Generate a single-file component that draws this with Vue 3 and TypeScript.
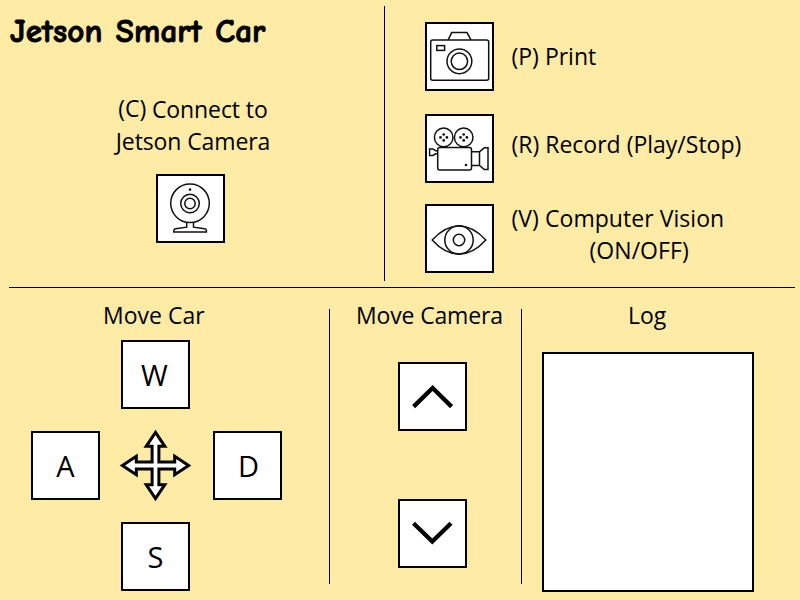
<script setup lang="ts">
interface Key {
  label: string
  area: string
}

const keys: Key[] = [
  { label: 'W', area: 'up' },
  { label: 'A', area: 'left' },
  { label: 'D', area: 'right' },
  { label: 'S', area: 'down' },
]
</script>

<template>
  <main class="app">
    <section class="top">
      <div class="connect">
        <h1 class="title">Jetson Smart Car</h1>
        <p class="text connect-label"><span class="hotkey">(C)</span> Connect to<br />Jetson Camera</p>
        <button class="tile webcam" aria-label="Connect">
          <svg class="icon" viewBox="0 0 65 65">
            <circle cx="32" cy="27.3" r="19.3" />
            <circle cx="32" cy="27.5" r="9.3" />
            <circle cx="32" cy="27.5" r="5.2" />
            <circle class="dot" cx="32" cy="13.6" r="1.3" />
            <path d="M28.7 46.5V51.2L17.6 52.8Q15.8 53.1 15.8 54.5V56H48.4V54.5Q48.4 53.1 46.6 52.8L35.5 51.2V46.5" />
          </svg>
        </button>
      </div>
      <div class="rule tall"></div>
      <div class="actions">
        <div class="action print">
          <button class="tile" aria-label="Print">
            <svg class="icon" viewBox="0 0 65 65">
              <rect x="3.7" y="16" width="58" height="40.2" rx="2" />
              <path d="M21.2 15.8L24.7 8.6H40L44 15.8" />
              <rect x="9.8" y="21.6" width="7.8" height="4.8" />
              <circle cx="32.4" cy="37.3" r="12.4" />
              <circle cx="32.4" cy="37.3" r="8.2" />
            </svg>
          </button>
          <p class="text">(P) Print</p>
        </div>
        <div class="action record">
          <button class="tile" aria-label="Record">
            <svg class="icon" viewBox="0 0 65 65">
              <circle cx="16.7" cy="21.4" r="9.3" />
              <circle cx="36.7" cy="21.4" r="9.3" />
              <g class="dot">
                <circle cx="16.7" cy="18.5" r="1.35" />
                <circle cx="16.7" cy="24.4" r="1.35" />
                <circle cx="13.5" cy="21.4" r="1.35" />
                <circle cx="19.9" cy="21.4" r="1.35" />
                <circle cx="36.7" cy="18.5" r="1.35" />
                <circle cx="36.7" cy="24.4" r="1.35" />
                <circle cx="33.5" cy="21.4" r="1.35" />
                <circle cx="39.9" cy="21.4" r="1.35" />
                <circle cx="39" cy="49" r="1.3" />
              </g>
              <rect x="10.7" y="31.5" width="33.8" height="22.5" rx="2" />
              <path d="M44.5 35.8H52.5L57.3 31.8H61V53.6H57.3L52.5 49.5H44.5M52.5 35.8V49.5" />
              <path d="M10.7 34.7H8.5L6 33H2.6V39.4H6L8.5 37.8H10.7" />
            </svg>
          </button>
          <p class="text">(R) Record (Play/Stop)</p>
        </div>
        <div class="action vision">
          <button class="tile" aria-label="Computer Vision">
            <svg class="icon" viewBox="0 0 65 65">
              <path d="M5.2 34C22 15.2 42 15.2 58.8 34C42 52.8 22 52.8 5.2 34Z" />
              <circle cx="32" cy="34" r="14.2" />
              <circle cx="32" cy="34" r="5.7" />
            </svg>
          </button>
          <p class="text">(V) Computer Vision<br /><span class="state">(ON/OFF)</span></p>
        </div>
      </div>
    </section>

    <div class="rule wide"></div>

    <section class="bottom">
      <div class="panel car">
        <h2 class="text heading">Move Car</h2>
        <div class="pad">
          <button v-for="key in keys" :key="key.label" class="tile key" :class="key.area">{{ key.label }}</button>
          <svg class="compass" viewBox="0 0 69 69">
            <path
              d="M34.5 1.4L43.8 15.3H37.9V31.1H53.7V25.2L67.6 34.5L53.7 43.8V37.9H37.9V53.7H43.8L34.5 67.6L25.2 53.7H31.1V37.9H15.3V43.8L1.4 34.5L15.3 25.2V31.1H31.1V15.3H25.2Z"
            />
          </svg>
        </div>
      </div>
      <div class="rule tall"></div>
      <div class="panel camera">
        <h2 class="text heading">Move Camera</h2>
        <button class="tile tilt-up" aria-label="Camera up">
          <svg class="icon chevron" viewBox="0 0 65 65"><path d="M13.6 42.6L32.6 23.9L51.6 42.6" /></svg>
        </button>
        <button class="tile tilt-down" aria-label="Camera down">
          <svg class="icon chevron" viewBox="0 0 65 65"><path d="M13.5 22.2L32.3 40.6L51 22.2" /></svg>
        </button>
      </div>
      <div class="rule tall"></div>
      <div class="panel log">
        <h2 class="text heading">Log</h2>
        <div class="console"></div>
      </div>
    </section>
  </main>
</template>

<style>
body {
  background: #fdeba6;
}
</style>

<style scoped>
.app {
  box-sizing: border-box;
  width: 800px;
  height: 600px;
  overflow: hidden;
  display: grid;
  grid-template-rows: 287px 1px 1fr;
  background: #fdeba6;
  color: #000;
  font-family: "Open Sans", "Noto Sans", sans-serif;
}

.top {
  display: grid;
  grid-template-columns: 384px 1px 1fr;
}

.rule {
  background: #000;
}

.rule.wide {
  margin: 0 5px 0 9px;
}

.top .rule.tall {
  margin: 6px 0;
}

.bottom .rule.tall {
  margin: 21px 0 16px;
}

.title {
  margin: 0;
  padding: 13px 0 0 10px;
  height: 35px;
  font: 700 33px/36px "Comic Sans MS", "Comic Neue", Lato, sans-serif;
  letter-spacing: 0.15px;
  word-spacing: 1.5px;
  -webkit-text-stroke: 0.9px #000;
}

.text {
  margin: 0;
  font-size: 23px;
  font-weight: 400;
  line-height: 32px;
  white-space: nowrap;
}

.connect {
  display: flex;
  flex-direction: column;
}

.connect-label {
  margin-top: 45px;
  padding-left: 2px;
  letter-spacing: -0.1px;
  text-align: center;
}

.hotkey {
  line-height: 1;
  vertical-align: 1px;
}

.tile {
  box-sizing: border-box;
  display: block;
  flex: none;
  width: 69px;
  height: 69px;
  margin: 0;
  padding: 0;
  border: 2px solid #000;
  border-radius: 0;
  background: #fff;
  color: #000;
}

.webcam {
  margin: 17px 0 0 156px;
}

.icon {
  display: block;
  width: 65px;
  height: 65px;
  fill: none;
  stroke: #111;
  stroke-width: 1.5;
}

.icon .dot {
  fill: #111;
  stroke: none;
}

.chevron {
  stroke: #000;
  stroke-width: 4.3;
}

.actions {
  padding: 22px 0 0 40px;
}

.action {
  display: flex;
  align-items: flex-start;
  gap: 17.5px;
  height: 69px;
}

.print .text {
  margin-top: 18px;
}

.record {
  margin-top: 23px;
}

.record .text {
  margin-top: 14px;
}

.vision {
  margin-top: 21px;
}

.vision .text {
  margin-top: -2px;
  letter-spacing: 0.05px;
}

.state {
  padding-left: 78px;
}

.bottom {
  display: grid;
  grid-template-columns: 329px 1px 191px 1px 1fr;
}

.panel {
  padding-top: 11px;
}

.heading {
  height: 32px;
}

.car .heading {
  padding-left: 103px;
}

.camera .heading {
  padding-left: 26px;
  letter-spacing: -0.15px;
}

.log .heading {
  padding-left: 106px;
}

.pad {
  display: grid;
  grid-template-columns: 90px 92px 69px;
  grid-template-rows: repeat(3, 69px);
  row-gap: 22px;
  padding: 9px 0 0 31px;
}

.key {
  font: 29px/65px "Open Sans", "Noto Sans", sans-serif;
  text-align: center;
}

.up {
  grid-area: 1 / 2;
  padding-right: 2px;
}

.left {
  grid-area: 2 / 1;
}

.right {
  grid-area: 2 / 3;
  padding: 0 0 2px 2px;
}

.down {
  grid-area: 3 / 2;
  padding-bottom: 2px;
}

.compass {
  grid-area: 2 / 2;
  width: 69px;
  height: 69px;
  overflow: visible;
  fill: #fff;
  stroke: #000;
  stroke-width: 3;
}

.tilt-up {
  margin: 31px 0 0 68px;
}

.tilt-down {
  margin: 68px 0 0 68px;
}

.console {
  box-sizing: border-box;
  width: 212px;
  height: 240px;
  margin: 21px 0 0 20px;
  border: 2px solid #000;
  background: #fff;
}
</style>
